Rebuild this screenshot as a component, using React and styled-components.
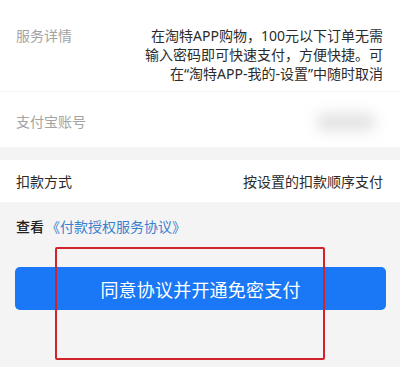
import React from 'react';
import styled, { createGlobalStyle } from 'styled-components';

const GlobalStyle = createGlobalStyle`
  body {
    margin: 0;
    background: #f4f4f4;
    font-family: "Noto Sans", "Noto Sans CJK SC", sans-serif;
  }
`;

const Page = styled.div`
  position: relative;
  width: 400px;
  min-height: 367px;
  background: #f4f4f4;
  overflow: hidden;
`;

const Card = styled.div`
  background: #ffffff;
  margin-bottom: ${props => props.gap || 0}px;
`;

const Row = styled.div`
  display: flex;
  justify-content: space-between;
  align-items: ${props => (props.top ? 'flex-start' : 'center')};
  padding: ${props => props.pad || '0 17px 0 16px'};
  height: ${props => (props.h ? `${props.h}px` : 'auto')};
  box-sizing: border-box;
`;

const Divider = styled.div`
  height: 1px;
  background: #f6f6f6;
`;

const Label = styled.span`
  font-size: 14px;
  line-height: 19px;
  color: ${props => (props.muted ? '#a3a3a3' : '#2b2b2b')};
  white-space: nowrap;
`;

const Value = styled.span`
  font-size: 14px;
  line-height: 19px;
  color: #2b2b2b;
  text-align: right;
  white-space: nowrap;
`;

const Masked = styled.span`
  display: block;
  width: 58px;
  height: 18px;
  margin-right: 8px;
  background: #e3e3e3;
  border-radius: 6px;
  filter: blur(7px);
`;

const Agreement = styled.div`
  padding: 15px 16px 0;
  font-size: 14px;
  line-height: 20px;
  color: #222222;
  font-weight: 500;
`;

const Link = styled.a`
  color: #3b7fcf;
  font-weight: 400;
  text-decoration: none;
  margin-left: 2px;
`;

const ButtonWrap = styled.div`
  padding: 30px 14px 0 15px;
`;

const PrimaryButton = styled.button`
  display: block;
  width: 100%;
  height: 43px;
  border: none;
  border-radius: 5px;
  background: #1a77f5;
  color: #ffffff;
  font-family: inherit;
  font-size: 18px;
  letter-spacing: 0.2px;
  cursor: pointer;
`;

const Highlight = styled.div`
  position: absolute;
  left: 55px;
  top: 247px;
  width: 270px;
  height: 113px;
  box-sizing: border-box;
  border: 2px solid #d2232a;
  border-radius: 2px;
  pointer-events: none;
`;

export default function App() {
  return (
    <>
      <GlobalStyle />
      <Page>
        <Card gap={13}>
          <Row top pad="26px 17px 8px 16px">
            <Label muted>服务详情</Label>
            <Value>
              在淘特APP购物，100元以下订单无需
              <br />
              输入密码即可快速支付，方便快捷。可
              <br />
              在“淘特APP-我的-设置”中随时取消
            </Value>
          </Row>
          <Divider />
          <Row h={55} pad="4px 17px 0 16px">
            <Label muted>支付宝账号</Label>
            <Masked />
          </Row>
        </Card>
        <Card>
          <Row h={42}>
            <Label>扣款方式</Label>
            <Value>按设置的扣款顺序支付</Value>
          </Row>
        </Card>
        <Agreement>
          查看<Link href="#">《付款授权服务协议》</Link>
        </Agreement>
        <ButtonWrap>
          <PrimaryButton>同意协议并开通免密支付</PrimaryButton>
        </ButtonWrap>
        <Highlight />
      </Page>
    </>
  );
}
